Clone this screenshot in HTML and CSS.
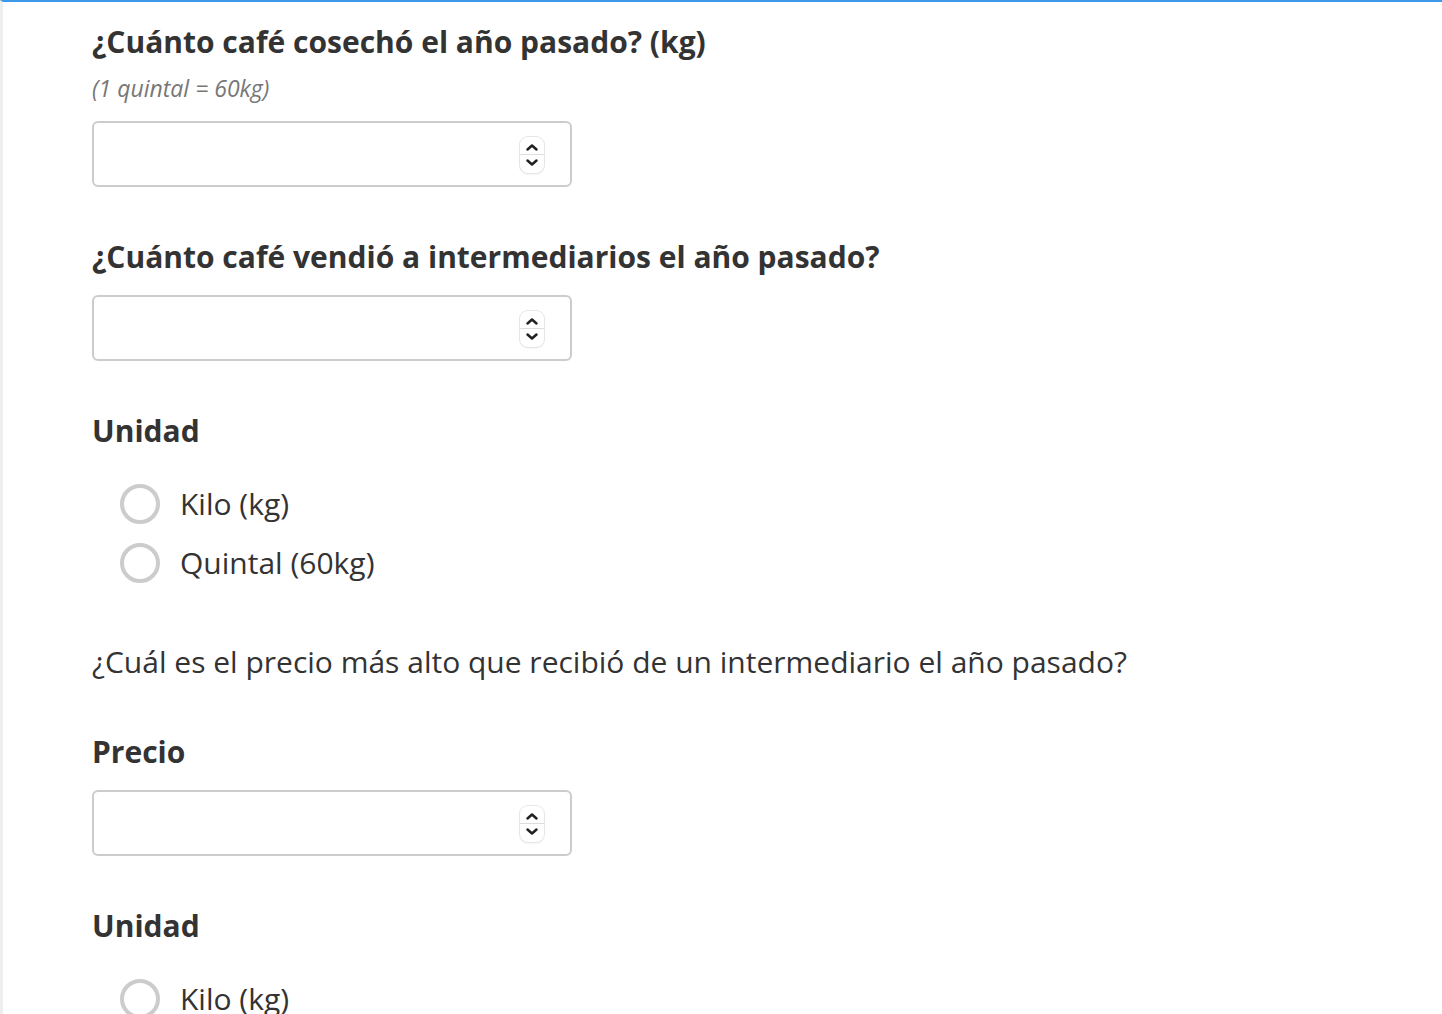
FILE: index.html
```html
<!DOCTYPE html>
<html lang="es">
<head>
    <meta charset="UTF-8">
    <meta name="viewport" content="width=device-width, initial-scale=1.0">
    <title>Encuesta de café</title>
    <link rel="stylesheet" href="styles.css">
</head>
<body>
    <div class="page">
        <div class="question">
            <label class="question-label" for="cosecha">¿Cuánto café cosechó el año pasado? (kg)</label>
            <div class="hint">(1 quintal = 60kg)</div>
            <div class="number-field">
                <input type="number" id="cosecha">
                <span class="spinner">
                    <svg width="24" height="36" viewBox="0 0 24 36"><polyline points="7.5,12.5 12,8.5 16.5,12.5"/><polyline points="7.5,23.5 12,27.5 16.5,23.5"/></svg>
                </span>
            </div>
        </div>

        <div class="question">
            <label class="question-label" for="vendido">¿Cuánto café vendió a intermediarios el año pasado?</label>
            <div class="number-field">
                <input type="number" id="vendido">
                <span class="spinner">
                    <svg width="24" height="36" viewBox="0 0 24 36"><polyline points="7.5,12.5 12,8.5 16.5,12.5"/><polyline points="7.5,23.5 12,27.5 16.5,23.5"/></svg>
                </span>
            </div>
        </div>

        <div class="question">
            <div class="question-label">Unidad</div>
            <div class="radio-group">
                <label class="radio"><input type="radio" name="unidad1"><span class="circle"></span>Kilo (kg)</label>
                <label class="radio"><input type="radio" name="unidad1"><span class="circle"></span>Quintal (60kg)</label>
            </div>
        </div>

        <p class="statement">¿Cuál es el precio más alto que recibió de un intermediario el año pasado?</p>

        <div class="question">
            <label class="question-label" for="precio">Precio</label>
            <div class="number-field">
                <input type="number" id="precio">
                <span class="spinner">
                    <svg width="24" height="36" viewBox="0 0 24 36"><polyline points="7.5,12.5 12,8.5 16.5,12.5"/><polyline points="7.5,23.5 12,27.5 16.5,23.5"/></svg>
                </span>
            </div>
        </div>

        <div class="question">
            <div class="question-label">Unidad</div>
            <div class="radio-group">
                <label class="radio"><input type="radio" name="unidad2"><span class="circle"></span>Kilo (kg)</label>
                <label class="radio"><input type="radio" name="unidad2"><span class="circle"></span>Quintal (60kg)</label>
            </div>
        </div>
    </div>
</body>
</html>
```

FILE: styles.css
```css
body {
    font-family: "Open Sans", sans-serif;
    margin: 0;
    padding: 0;
    background-color: #ffffff;
    color: #333333;
}
.page {
    border-top: 2px solid #3a99e8;
    border-left: 3px solid #eeeeee;
    padding: 19px 0 0 89px;
    min-height: 1100px;
}
.question {
    margin-bottom: 49px;
}
.question-label {
    display: block;
    font-size: 30px;
    font-weight: 700;
    line-height: 42px;
    margin-bottom: 17px;
}
.hint {
    font-size: 23px;
    font-style: italic;
    color: #777777;
    line-height: 30px;
    margin: -7px 0 18px;
}
.number-field {
    position: relative;
    width: 480px;
}
.number-field input {
    display: block;
    width: 100%;
    height: 66px;
    box-sizing: border-box;
    border: 2px solid #cccccc;
    border-radius: 6px;
    padding: 0 16px;
    font-family: inherit;
    font-size: 24px;
    color: #333;
    background: #fff;
    -moz-appearance: textfield;
    appearance: textfield;
    outline: none;
}
.number-field input::-webkit-outer-spin-button,
.number-field input::-webkit-inner-spin-button {
    -webkit-appearance: none;
    margin: 0;
}
.spinner {
    position: absolute;
    right: 28px;
    top: 16px;
    width: 24px;
    height: 36px;
    border-radius: 8px;
    background: #ffffff;
    box-shadow: 0 0 0 1px #e6e6e6, 0 1px 2px rgba(0, 0, 0, 0.12);
    pointer-events: none;
}
.spinner::after {
    content: "";
    position: absolute;
    left: 0;
    right: 0;
    top: 17px;
    height: 1px;
    background: #dddddd;
}
.spinner svg {
    display: block;
}
.spinner polyline {
    fill: none;
    stroke: #222222;
    stroke-width: 2.5;
    stroke-linecap: round;
    stroke-linejoin: round;
}
.radio-group {
    margin-top: 22px;
    padding-left: 28px;
}
.radio {
    display: flex;
    align-items: center;
    height: 59px;
    font-size: 30px;
    cursor: pointer;
}
.radio input {
    display: none;
}
.circle {
    width: 40px;
    height: 40px;
    box-sizing: border-box;
    border: 4px solid #cccccc;
    border-radius: 50%;
    margin-right: 20px;
    flex-shrink: 0;
}
.statement {
    font-size: 30px;
    line-height: 42px;
    margin: 0 0 48px;
}
```
